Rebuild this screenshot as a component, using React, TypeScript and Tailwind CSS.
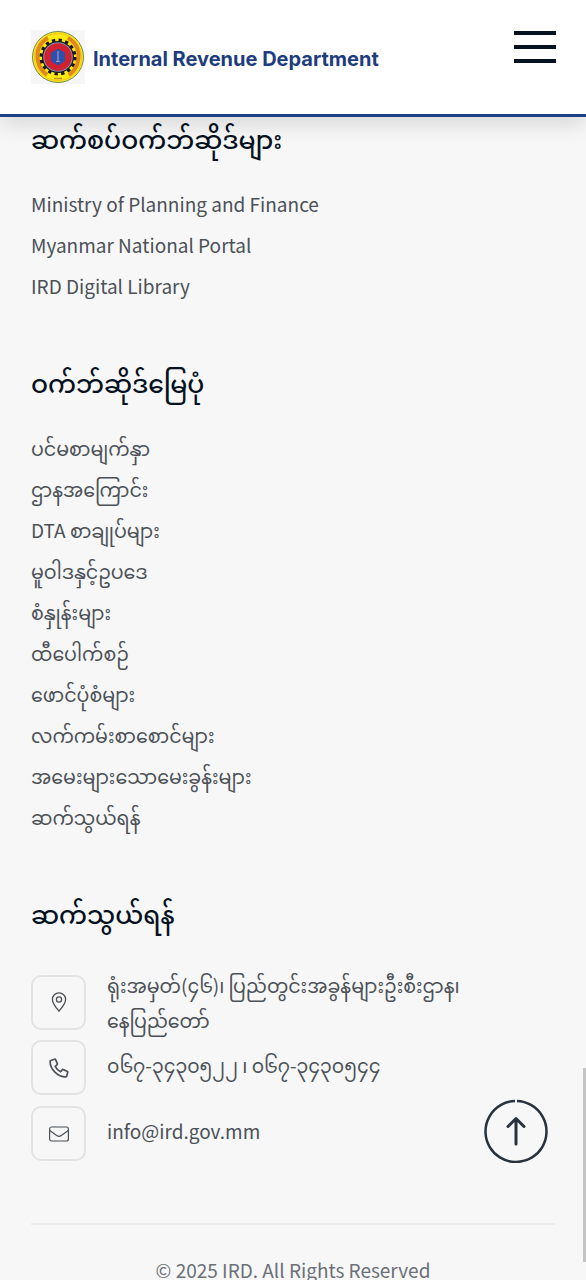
import React from "react";

interface LinkGroup {
  title: string;
  items: string[];
}

const websites: LinkGroup = {
  title: "ဆက်စပ်ဝက်ဘ်ဆိုဒ်များ",
  items: [
    "Ministry of Planning and Finance",
    "Myanmar National Portal",
    "IRD Digital Library",
  ],
};

const sitemap: LinkGroup = {
  title: "ဝက်ဘ်ဆိုဒ်မြေပုံ",
  items: [
    "ပင်မစာမျက်နှာ",
    "ဌာနအကြောင်း",
    "DTA စာချုပ်များ",
    "မူဝါဒနှင့်ဥပဒေ",
    "စံနှုန်းများ",
    "ထီပေါက်စဉ်",
    "ဖောင်ပုံစံများ",
    "လက်ကမ်းစာစောင်များ",
    "အမေးများသောမေးခွန်းများ",
    "ဆက်သွယ်ရန်",
  ],
};

function Logo() {
  return (
    <svg viewBox="0 0 54 54" className="size-[54px] shrink-0" aria-hidden="true">
      <rect width="54" height="54" fill="#f6f6f8" />
      <circle cx="27" cy="27" r="25.5" fill="#fdea12" stroke="#6f8a5c" strokeWidth="1" />
      <circle cx="27" cy="27" r="23.6" fill="none" stroke="#f5c518" strokeWidth="1" />
      {/* wreath */}
      <path d="M17 8C8 13 5 22 7 31c1 6 5 11 9 14" fill="none" stroke="#e2861b" strokeWidth="4" />
      <path d="M37 8c9 5 12 14 10 23-1 6-5 11-9 14" fill="none" stroke="#e2861b" strokeWidth="4" />
      <path d="M23 48.500h8" stroke="#c8902a" strokeWidth="1.500" />
      {/* gear */}
      <circle cx="27" cy="27" r="17" fill="none" stroke="#17171c" strokeWidth="3" strokeDasharray="3.340 3.340" />
      <circle cx="27" cy="27" r="16" fill="#17171c" />
      <circle cx="27" cy="27" r="14.800" fill="#8b8fb5" />
      <circle cx="27" cy="27" r="13.800" fill="#d5202c" />
      <circle cx="27" cy="27" r="11.500" fill="none" stroke="#a03a4e" strokeWidth="1" strokeDasharray="2 2" />
      <path d="M27 18.500l7 4.250v8.500L27 35.500l-7-4.250v-8.500z" fill="#2c4fb0" />
      <path d="M27 21v11M25 31.500h4" stroke="#8fa0b8" strokeWidth="1.200" />
    </svg>
  );
}

function PinIcon() {
  return (
    <svg viewBox="0 0 20 20" className="size-5" fill="none" stroke="currentColor" strokeWidth="1.300">
      <path d="M10 19.200C6.500 15 3.400 11 3.400 7.400a6.600 6.600 0 0 1 13.200 0C16.600 11 13.500 15 10 19.200z" strokeLinejoin="round" />
      <circle cx="10" cy="7.500" r="2.600" />
    </svg>
  );
}

function PhoneIcon() {
  return (
    <svg viewBox="0 0 20 20" className="size-5" fill="none" stroke="currentColor" strokeWidth="1.700" strokeLinejoin="round">
      <path d="M1.700 2.500L5.500 1.300c.6-.2 1 .1 1.200.6l1.600 3.700c.2.500.1.900-.3 1.200L6.200 8.400c1.200 2.400 3 4.200 5.400 5.400l1.600-1.900c.3-.4.8-.5 1.200-.3l3.700 1.600c.5.200.7.600.6 1.100l-.9 3.800c-.1.500-.5.800-1 .8C8.700 18.900 1.100 11.300 1.100 3.500c0-.5.2-.9.600-1z" />
    </svg>
  );
}

function MailIcon() {
  return (
    <svg viewBox="0 0 20 20" className="size-5" fill="none" stroke="currentColor" strokeWidth="1.200" strokeLinejoin="round">
      <rect x=".6" y="3" width="18.800" height="14" rx="2" />
      <path d="M.8 6.500l6.900 5c1.400 1 3.200 1 4.600 0l6.900-5" />
    </svg>
  );
}

function FooterLinks({ group }: { group: LinkGroup }) {
  return (
    <section className="mb-[56px]">
      <h2 className="mb-[25px] text-[25px] leading-[40px] font-medium text-[#06121f]">
        {group.title}
      </h2>
      <ul>
        {group.items.map((item) => (
          <li key={item} className="h-[41px] leading-[41px] whitespace-nowrap">
            <a href="#">{item}</a>
          </li>
        ))}
      </ul>
    </section>
  );
}

function ContactIcon({ children }: { children: React.ReactNode }) {
  return (
    <span className="flex size-[55px] shrink-0 items-center justify-center rounded-[10px] border-2 border-[#e3e3e3]">
      {children}
    </span>
  );
}

export default function App() {
  return (
    <div className="relative h-screen overflow-hidden bg-[#f7f7f7] font-['Noto_Sans_CJK_SC','Noto_Sans_Myanmar','Padauk',sans-serif] text-[19px] text-[#4b5157]">
      <header className="relative z-10 flex h-[117px] items-start justify-between border-b-3 border-[#1f3f86] bg-white px-[30px] pt-[30px] shadow-[0_8px_20px_rgba(0,0,0,0.12)]">
        <a href="#" className="flex items-center gap-2 pl-px">
          <Logo />
          <span className="pt-1 font-['Inter',sans-serif] text-[20px] font-bold whitespace-nowrap text-[#203c80]">
            Internal Revenue Department
          </span>
        </a>
        <button type="button" aria-label="Menu" className="flex w-[42px] flex-col gap-[10px] pt-px">
          <span className="h-1 w-full bg-[#06121f]" />
          <span className="h-1 w-full bg-[#06121f]" />
          <span className="h-1 w-full bg-[#06121f]" />
        </button>
      </header>

      <footer className="px-[31px] pt-px">
        <FooterLinks group={websites} />
        <FooterLinks group={sitemap} />

        <section>
          <h2 className="mb-[34px] text-[25px] leading-[40px] font-medium text-[#06121f]">
            ဆက်သွယ်ရန်
          </h2>
          <address className="flex flex-col gap-[3px] not-italic">
            <div className="flex items-center gap-[21px]">
              <ContactIcon>
                <PinIcon />
              </ContactIcon>
              <p className="leading-[35px]">
                ရုံးအမှတ်(၄၆)၊ ပြည်တွင်းအခွန်များဦးစီးဌာန၊
                <br />
                နေပြည်တော်
              </p>
            </div>
            <div className="flex h-[63px] items-start gap-[21px]">
              <ContactIcon>
                <PhoneIcon />
              </ContactIcon>
              <p className="leading-[50px]">၀၆၇-၃၄၃၀၅၂၂ ၊ ၀၆၇-၃၄၃၀၅၄၄</p>
            </div>
            <div className="flex h-[63px] items-start gap-[21px]">
              <ContactIcon>
                <MailIcon />
              </ContactIcon>
              <a href="mailto:info@ird.gov.mm" className="leading-[50px]">
                info@ird.gov.mm
              </a>
            </div>
          </address>
        </section>

        <p className="mt-[54px] border-t-2 border-[#ececec] pt-[27px] text-center leading-[35px] text-[#6b7078]">
          © 2025 IRD. All Rights Reserved
        </p>
      </footer>

      {/* back to top */}
      <button type="button" aria-label="Back to top" className="absolute right-[38px] bottom-[117px] size-[64px]">
        <svg viewBox="0 0 64 64" fill="none" stroke="#27323d" strokeLinecap="round">
          <path d="M33 2A30.500 30.500 0 1 1 31 2" strokeWidth="2.500" strokeLinecap="butt" />
          <path d="M32 45V20M24 27.500l8-8 8 8" strokeWidth="3" strokeLinejoin="round" />
        </svg>
      </button>

      {/* scroll thumb */}
      <div className="absolute right-0 bottom-[18px] h-[194px] w-[3px] bg-[#c4c4c4]" />
    </div>
  );
}
